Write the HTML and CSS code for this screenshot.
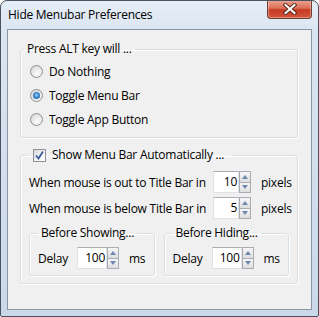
FILE: index.html
```html
<!DOCTYPE html>
<html lang="en">
<head>
    <meta charset="UTF-8">
    <meta name="viewport" content="width=device-width, initial-scale=1.0">
    <title>Hide Menubar Preferences</title>
    <link rel="stylesheet" href="styles.css">
</head>
<body>

    <div class="window">
        <div class="titlebar">
            <span class="title">Hide Menubar Preferences</span>
            <button type="button" class="close" aria-label="Close">
                <svg width="14" height="12" viewBox="0 0 14 12">
                    <path d="M2.5 2 L11.5 10 M11.5 2 L2.5 10" stroke="#5a2a22" stroke-width="4" stroke-linecap="square"/>
                    <path d="M2.5 2 L11.5 10 M11.5 2 L2.5 10" stroke="#fff" stroke-width="2" stroke-linecap="square"/>
                </svg>
            </button>
        </div>

        <div class="client">
            <fieldset class="group group-alt">
                <legend>Press ALT key will ...</legend>
                <label class="radio-row"><span class="radio"></span>Do Nothing</label>
                <label class="radio-row"><span class="radio checked"></span>Toggle Menu Bar</label>
                <label class="radio-row"><span class="radio"></span>Toggle App Button</label>
            </fieldset>

            <fieldset class="group group-auto">
                <legend class="check-legend">
                    <span class="checkbox">
                        <svg width="11" height="11" viewBox="0 0 11 11">
                            <path d="M2 5.5 L4.5 8.5 L9 1.5" fill="none" stroke="#3b5a9a" stroke-width="1.8"/>
                        </svg>
                    </span>
                    Show Menu Bar Automatically ...
                </legend>

                <div class="rows">
                    <span>When mouse is out to Title Bar in</span>
                    <span class="spin">
                        <span class="spin-text">10</span>
                        <span class="spin-btns"><span class="up"></span><span class="down"></span></span>
                    </span>
                    <span class="unit">pixels</span>

                    <span>When mouse is below Title Bar in</span>
                    <span class="spin">
                        <span class="spin-text">5</span>
                        <span class="spin-btns"><span class="up"></span><span class="down"></span></span>
                    </span>
                    <span class="unit">pixels</span>
                </div>

                <div class="delays">
                    <fieldset class="group sub">
                        <legend>Before Showing...</legend>
                        <div class="delay-row">
                            <span class="delay-label">Delay</span>
                            <span class="spin wide">
                                <span class="spin-text">100</span>
                                <span class="spin-btns"><span class="up"></span><span class="down"></span></span>
                            </span>
                            <span class="unit">ms</span>
                        </div>
                    </fieldset>
                    <fieldset class="group sub">
                        <legend>Before Hiding...</legend>
                        <div class="delay-row">
                            <span class="delay-label">Delay</span>
                            <span class="spin wide">
                                <span class="spin-text">100</span>
                                <span class="spin-btns"><span class="up"></span><span class="down"></span></span>
                            </span>
                            <span class="unit">ms</span>
                        </div>
                    </fieldset>
                </div>
            </fieldset>
        </div>
    </div>

</body>
</html>
```

FILE: styles.css
```css
body {
    margin: 0;
    padding: 0;
    font-family: "Segoe UI", "Open Sans", sans-serif;
    font-size: 12px;
    letter-spacing: -0.25px;
    color: #000;
    background: #fff;
    white-space: nowrap;
}

.window {
    width: 319px;
    height: 317px;
    box-sizing: border-box;
    border: 1px solid #4a5260;
    border-radius: 7px 7px 2px 2px;
    background: linear-gradient(to bottom, #e6eef7 0, #dbe5f1 30px, #cad8e8 100%);
    display: flex;
    flex-direction: column;
    overflow: hidden;
}

.titlebar {
    height: 28px;
    display: flex;
    align-items: center;
    padding-left: 7px;
}

.title {
    line-height: 16px;
    padding-bottom: 1px;
}

.close {
    margin-left: auto;
    margin-right: 6px;
    margin-top: -1px;
    align-self: flex-start;
    width: 45px;
    height: 19px;
    padding: 0;
    border: 1px solid #6f3b35;
    border-top: none;
    border-radius: 0 0 4px 4px;
    background: linear-gradient(to bottom, #eba694 0, #dc6f56 45%, #c53a22 55%, #d4553a 100%);
    box-shadow: inset 0 0 0 1px rgba(255, 255, 255, 0.35);
    display: flex;
    align-items: center;
    justify-content: center;
}

.client {
    flex: 1;
    margin: 0 6px 6px 6px;
    border: 1px solid #8a97a6;
    background-color: #f0f0f0;
    padding: 0 13px 0 12px;
}

.group {
    margin: 0;
    padding: 0;
    min-width: 0;
    border: 1px solid #d5dfe5;
    border-radius: 3px;
    box-shadow: inset 1px 1px 0 #fff, 1px 1px 0 #fff;
}

.group legend {
    margin-left: 3px;
    padding: 0 3px;
    line-height: 16px;
}

.group-alt {
    margin-top: 11px;
    padding: 2px 0 6px 0;
}

.radio-row {
    height: 24px;
    display: flex;
    align-items: center;
    gap: 6px;
    padding-left: 9px;
}

.radio {
    width: 13px;
    height: 13px;
    box-sizing: border-box;
    border-radius: 50%;
    border: 1px solid #8f9294;
    background: radial-gradient(circle at 60% 65%, #fdfdfd 0, #eaeaea 45%, #cfcfcf 100%);
    display: flex;
    align-items: center;
    justify-content: center;
}

.radio.checked::after {
    content: "";
    width: 7px;
    height: 7px;
    border-radius: 50%;
    background: radial-gradient(circle at 50% 45%, #9ad4fb 0, #3d8ad0 45%, #174a7e 100%);
}

.group-auto {
    margin-top: 9px;
    padding: 8px 0 7px 0;
}

.group .check-legend {
    margin-left: 6px;
    padding: 0 8px 0 6px;
    display: flex;
    align-items: center;
    gap: 6px;
}

.checkbox {
    width: 13px;
    height: 13px;
    box-sizing: border-box;
    border: 1px solid #8f9294;
    background: linear-gradient(135deg, #d6d9dd 0, #f3f4f5 60%, #fff 100%);
    display: flex;
    align-items: center;
    justify-content: center;
}

.rows {
    display: grid;
    grid-template-columns: 184px 38px auto;
    row-gap: 4px;
    align-items: center;
    padding: 0 8px;
}

.unit {
    margin-left: 10px;
}

.spin {
    display: flex;
    height: 22px;
}

.spin-text {
    width: 26px;
    box-sizing: border-box;
    background: #fff;
    border: 1px solid #dfe3e8;
    border-top-color: #abadb3;
    text-align: right;
    line-height: 20px;
    padding-right: 1px;
}

.spin.wide .spin-text {
    width: 30px;
}

.spin-btns {
    width: 12px;
    display: flex;
    flex-direction: column;
}

.spin-btns span {
    flex: 1;
    box-sizing: border-box;
    border: 1px solid #a8adb4;
    background: linear-gradient(to bottom, #f6f6f6, #dedede);
    display: flex;
    align-items: center;
    justify-content: center;
}

.spin-btns .down {
    border-top: none;
}

.spin-btns .up::after,
.spin-btns .down::after {
    content: "";
    border-left: 3px solid transparent;
    border-right: 3px solid transparent;
}

.spin-btns .up::after {
    border-bottom: 4px solid #6d88b3;
}

.spin-btns .down::after {
    border-top: 4px solid #6d88b3;
}

.delays {
    display: grid;
    grid-template-columns: 1fr 1fr;
    column-gap: 9px;
    margin-top: 6px;
    padding: 0 8px;
}

.sub legend {
    margin-left: 8px;
}

.delay-row {
    display: flex;
    align-items: center;
    height: 22px;
    padding: 6px 0 6px 8px;
}

.delay-label {
    width: 39px;
}
```
